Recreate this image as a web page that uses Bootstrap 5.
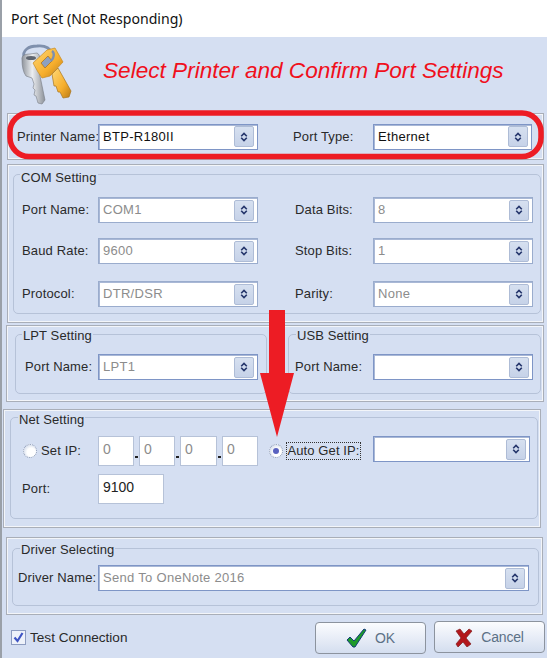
<!doctype html>
<html lang="en"><head><meta charset="utf-8"><title>Port Set</title>
<link href="https://cdn.jsdelivr.net/npm/bootstrap@5.3.0/dist/css/bootstrap.min.css" rel="stylesheet">
<style>
html,body{margin:0;background:#d5dff2}
body{font-family:"Liberation Sans",Arial,sans-serif;font-size:13px;color:#222;width:547px;height:658px;overflow:hidden}
.dlg{position:relative;width:547px;height:658px;background:#d5dff2}
.dlg::after{content:"";position:absolute;left:0;top:0;bottom:0;width:2px;background:#9aa0a8}
.ttl{height:37px;background:#fff;padding-left:11px;font-family:"Noto Sans",sans-serif;font-size:14.1px;line-height:38px;color:#111}
.hd{height:73px}
.keys{margin-left:20px;margin-top:6px;width:52px;height:63px;flex:none}
.hd-txt{margin:0 0 0 31px;font-size:22.6px;font-style:italic;color:#f0101c;font-weight:400;line-height:68px;white-space:nowrap}
.outer{border:1px solid #a9aeb8;box-shadow:inset 0 0 0 1px #f3f5f9;flex:none}
.grp{border:1px solid #b6c2d8;border-radius:5px}
.cap{width:fit-content;line-height:16px;background:#d5dff2;padding:0 1px;color:#2a2a2a;white-space:nowrap;letter-spacing:.1px}
.fr{display:flex;align-items:center}
.lb{flex:none;white-space:nowrap;color:#2a2a2a;letter-spacing:.15px}
.cmb{flex:none;display:flex;align-items:center;height:26px;width:160px;background:#fff;border:1px solid #9aaccd;box-shadow:inset 1px 1px 0 #a9b8d6;padding-left:4px;white-space:nowrap;color:#111;letter-spacing:.3px}
.cmb.off{color:#8c8c8c}
.cmb.on{border-color:#7e95c6}
.cmb span{flex:1}
.cbtn{flex:none;width:20px;height:21px;margin-right:3px;padding:0;display:flex;align-items:center;justify-content:center;background:linear-gradient(#d6e0f0,#c6d2e8);border:1px solid #aebcd6;border-radius:2px}
.ipf{flex:none;background:#fff;border:1px solid #b6c2d8;height:30px;padding:1px 0 0 4px;line-height:22px;color:#8c8c8c;font-size:14px}
.dot{flex:none;width:5px;height:30px;position:relative}
.dot::after{content:"";position:absolute;left:1px;bottom:8px;width:3px;height:2px;background:#222}
.rad{flex:none;width:14px;height:14px;border-radius:50%;background:radial-gradient(circle at 60% 60%,#fff 40%,#c9d3e6 90%);border:1px dotted #8b99b5;display:flex;align-items:center;justify-content:center}
.rad i{display:block;width:6px;height:6px;border-radius:50%;background:#5a62c0}
.focusbox{border:1px dotted #333;height:18px;width:75px;line-height:16px;padding:0;text-align:center;white-space:nowrap;margin-left:3px;letter-spacing:.1px;color:#2a2a2a}
.chk{flex:none;width:15px;height:15px;background:#eef2fa;border:1px solid #8d9cc0;display:flex;align-items:center;justify-content:center}
.wbtn{flex:none;padding:0;display:flex;align-items:center;justify-content:center;background:linear-gradient(#fbfcfe,#e8edf7 50%,#d4deef);border:1px solid #8c939e;border-radius:4px;color:#5c7186;font-size:14px;height:32px;width:111px;letter-spacing:-.2px}
.wbtn:hover{background:linear-gradient(#fbfcfe,#e8edf7 50%,#d4deef)}
.ovl{position:absolute;left:0;top:0;pointer-events:none}
.p1{margin:3px 0 0 7px;width:537px;height:47px;padding-left:9px}
.l1{width:81px}.l2{margin-left:35px;width:80px}.c2{width:159px}
.p2{margin:4px 0 0 7px;width:537px;height:159px;padding:9px 2px 8px 5px}
.g2{height:140px}.g2>.cap{margin:-5px 0 0 6px}
.r1{margin-top:11px;padding-left:8px}.r2{margin-top:15px;padding-left:8px}.r3{margin-top:17px;padding-left:8px}
.la{width:76px}.lc{margin-left:37px;width:78px}
.pr{margin-top:2px}
.p3{margin-left:6px;width:266px;height:77px;padding:8px 4px 7px 8px}
.p4{margin-left:11px;width:261px;height:77px;padding:8px 2px 7px 4px}
.g3{height:60px}.g3>.cap{margin:-7px 0 0 6px}.g3>.cap4{margin-left:7px}
.r4{margin-top:10px;padding-left:9px}.r5{padding-left:6px}
.ld{width:73px}.le{width:78px}
.p5{margin:7px 0 0 3px;width:538px;height:119px;padding:7px 2px 8px 6px}
.g5{height:102px}.g5>.cap{margin:-6px 0 0 7px}
.r6{margin-top:8px;padding-left:12px}
.lf{width:57px;margin-left:4px}
.w36{width:36px}.w37{width:37px}.w66{width:66px;color:#222}
.r2nd{margin-left:11px}
.c5{width:157px;margin-left:12px;align-self:flex-start}
.r7{margin-top:8px;padding-left:11px}.lg{width:76px}
.p6{margin:9px 0 0 6px;width:537px;height:78px;padding:10px 3px 8px 5px}
.g6{height:58px}.g6>.cap{margin:-7px 0 0 7px}
.r8{margin-top:7px;padding-left:5px}.lh{width:80px}.c6{width:431px}
.ftr{padding:15px 0 0 11px}
.tc{line-height:15px;font-size:13.6px;width:285px;letter-spacing:0}
.b1{margin-top:-8px}
.b2{margin-top:-9px;margin-left:8px}
.chv{width:10px;height:10px}
</style></head>
<body>
<svg width="0" height="0" class="position-absolute" aria-hidden="true"><symbol id="chev" viewBox="0 0 10 10"><path d="M2.2 4.2L5 1.4l2.8 2.8M2.2 5.8L5 8.6l2.8-2.8" fill="none" stroke="#24356b" stroke-width="1.6"/></symbol></svg>
<div class="dlg d-flex flex-column">
  <div class="ttl">Port Set (Not Responding)</div>
  <div class="hd d-flex">
    <svg class="keys" viewBox="20 43 52 63" aria-hidden="true">
      <defs>
        <linearGradient id="s" x1="0" y1="0" x2="1" y2="0"><stop offset="0" stop-color="#8e939b"/><stop offset=".45" stop-color="#eceef1"/><stop offset="1" stop-color="#8b9098"/></linearGradient>
        <linearGradient id="g" x1="0" y1="0" x2="1" y2="1"><stop offset="0" stop-color="#ffd978"/><stop offset=".6" stop-color="#f6ae2c"/><stop offset="1" stop-color="#b97a16"/></linearGradient>
      </defs>
      <path d="M24 58C22 50 29 46 37 46c8-1 15 2 15 11" fill="none" stroke="#7f90ad" stroke-width="2.8"/>
      <path d="M22 60C21 55 26 54 30 54L37 53C39 54 40 56 40 60L40 76 45 100 42 104 38 103 36 96 34 95 35 90 33 88 34 84 32 78 26 76C23 72 22 66 22 60Z" fill="url(#s)" stroke="#777c85" stroke-width=".6"/>
      <ellipse cx="31" cy="58" rx="5" ry="2" fill="#5f6570"/>
      <path d="M33 63L47 50 55 48 63 62 50 76 42 78 38 72Z" fill="url(#g)" stroke="#c98a20" stroke-width=".7"/>
      <path d="M41 63L48 56 52 61 45 68Z" fill="#8da0bf" stroke="#b3761a" stroke-width=".8"/>
      <path d="M52 74L58 68 71 91 69 97 63 98 60 92 58 92 56 86 54 86Z" fill="url(#g)" stroke="#a8741c" stroke-width=".7"/>
      <path d="M52 51c3 2 2 7-1 10" fill="none" stroke="#7f90ad" stroke-width="2.4"/>
    </svg>
    <h1 class="hd-txt">Select Printer and Confirm Port Settings</h1>
  </div>

  <div class="outer p1 fr">
    <span class="lb l1">Printer Name:</span>
    <div class="cmb on"><span>BTP-R180II</span><div class="cbtn"><svg class="chv"><use href="#chev"/></svg></div></div>
    <span class="lb l2">Port Type:</span>
    <div class="cmb on c2"><span>Ethernet</span><div class="cbtn"><svg class="chv"><use href="#chev"/></svg></div></div>
  </div>

  <div class="outer p2">
    <div class="grp g2">
      <div class="cap">COM Setting</div>
      <div class="fr r1"><span class="lb la">Port Name:</span><div class="cmb off"><span>COM1</span><div class="cbtn"><svg class="chv"><use href="#chev"/></svg></div></div><span class="lb lc">Data Bits:</span><div class="cmb off"><span>8</span><div class="cbtn"><svg class="chv"><use href="#chev"/></svg></div></div></div>
      <div class="fr r2"><span class="lb la">Baud Rate:</span><div class="cmb off"><span>9600</span><div class="cbtn"><svg class="chv"><use href="#chev"/></svg></div></div><span class="lb lc">Stop Bits:</span><div class="cmb off"><span>1</span><div class="cbtn"><svg class="chv"><use href="#chev"/></svg></div></div></div>
      <div class="fr r3"><span class="lb la">Protocol:</span><div class="cmb off"><span>DTR/DSR</span><div class="cbtn"><svg class="chv"><use href="#chev"/></svg></div></div><span class="lb lc">Parity:</span><div class="cmb off"><span>None</span><div class="cbtn"><svg class="chv"><use href="#chev"/></svg></div></div></div>
    </div>
  </div>

  <div class="d-flex pr">
    <div class="outer p3">
      <div class="grp g3">
        <div class="cap">LPT Setting</div>
        <div class="fr r4"><span class="lb ld">Port Name:</span><div class="cmb off on"><span>LPT1</span><div class="cbtn"><svg class="chv"><use href="#chev"/></svg></div></div></div>
      </div>
    </div>
    <div class="outer p4">
      <div class="grp g3">
        <div class="cap cap4">USB Setting</div>
        <div class="fr r4 r5"><span class="lb le">Port Name:</span><div class="cmb on"><span></span><div class="cbtn"><svg class="chv"><use href="#chev"/></svg></div></div></div>
      </div>
    </div>
  </div>

  <div class="outer p5">
    <div class="grp g5">
      <div class="cap">Net Setting</div>
      <div class="fr r6">
        <div class="rad"></div><span class="lb lf">Set IP:</span>
        <div class="ipf w36">0</div><div class="dot"></div>
        <div class="ipf w36">0</div><div class="dot"></div>
        <div class="ipf w37">0</div><div class="dot"></div>
        <div class="ipf w36">0</div>
        <div class="rad r2nd"><i></i></div><div class="focusbox">Auto Get IP:</div>
        <div class="cmb on c5"><span></span><div class="cbtn"><svg class="chv"><use href="#chev"/></svg></div></div>
      </div>
      <div class="fr r7"><span class="lb lg">Port:</span><div class="ipf w66">9100</div></div>
    </div>
  </div>

  <div class="outer p6">
    <div class="grp g6">
      <div class="cap">Driver Selecting</div>
      <div class="fr r8"><span class="lb lh">Driver Name:</span><div class="cmb off on c6"><span>Send To OneNote 2016</span><div class="cbtn"><svg class="chv"><use href="#chev"/></svg></div></div></div>
    </div>
  </div>

  <div class="d-flex align-items-start ftr">
    <div class="chk"><svg width="13" height="13" viewBox="0 0 13 13"><path d="M2.5 6.5l3 3.5 5-8" fill="none" stroke="#3f55c4" stroke-width="2.2"/></svg></div>
    <span class="lb ms-1 tc">Test Connection</span>
    <button type="button" class="btn wbtn b1"><svg width="21" height="20" viewBox="0 0 21 20"><path d="M1 12l3-3 4 4L18 1l2 1-11 17H7z" fill="#1d9a2a" stroke="#123a78" stroke-width="1"/></svg><span class="ms-2">OK</span></button>
    <button type="button" class="btn wbtn b2"><svg width="18" height="19" viewBox="0 0 18 19"><path d="M1 3l4-2 4 5 5-5 3 2-6 7 5 6-4 3-4-5-5 5-2-3 5-6z" fill="#b3171c" stroke="#7e1d1d" stroke-width=".7"/></svg><span class="ms-2">Cancel</span></button>
  </div>

  <svg class="ovl" width="547" height="658" aria-hidden="true">
    <rect x="10" y="113" width="531" height="43.5" rx="19" fill="none" stroke="#ed1c24" stroke-width="5.5"/>
    <path d="M269 310h16v63h9l-17 64-17-64h9z" fill="#ed1c24"/>
  </svg>
</div>
</body></html>
